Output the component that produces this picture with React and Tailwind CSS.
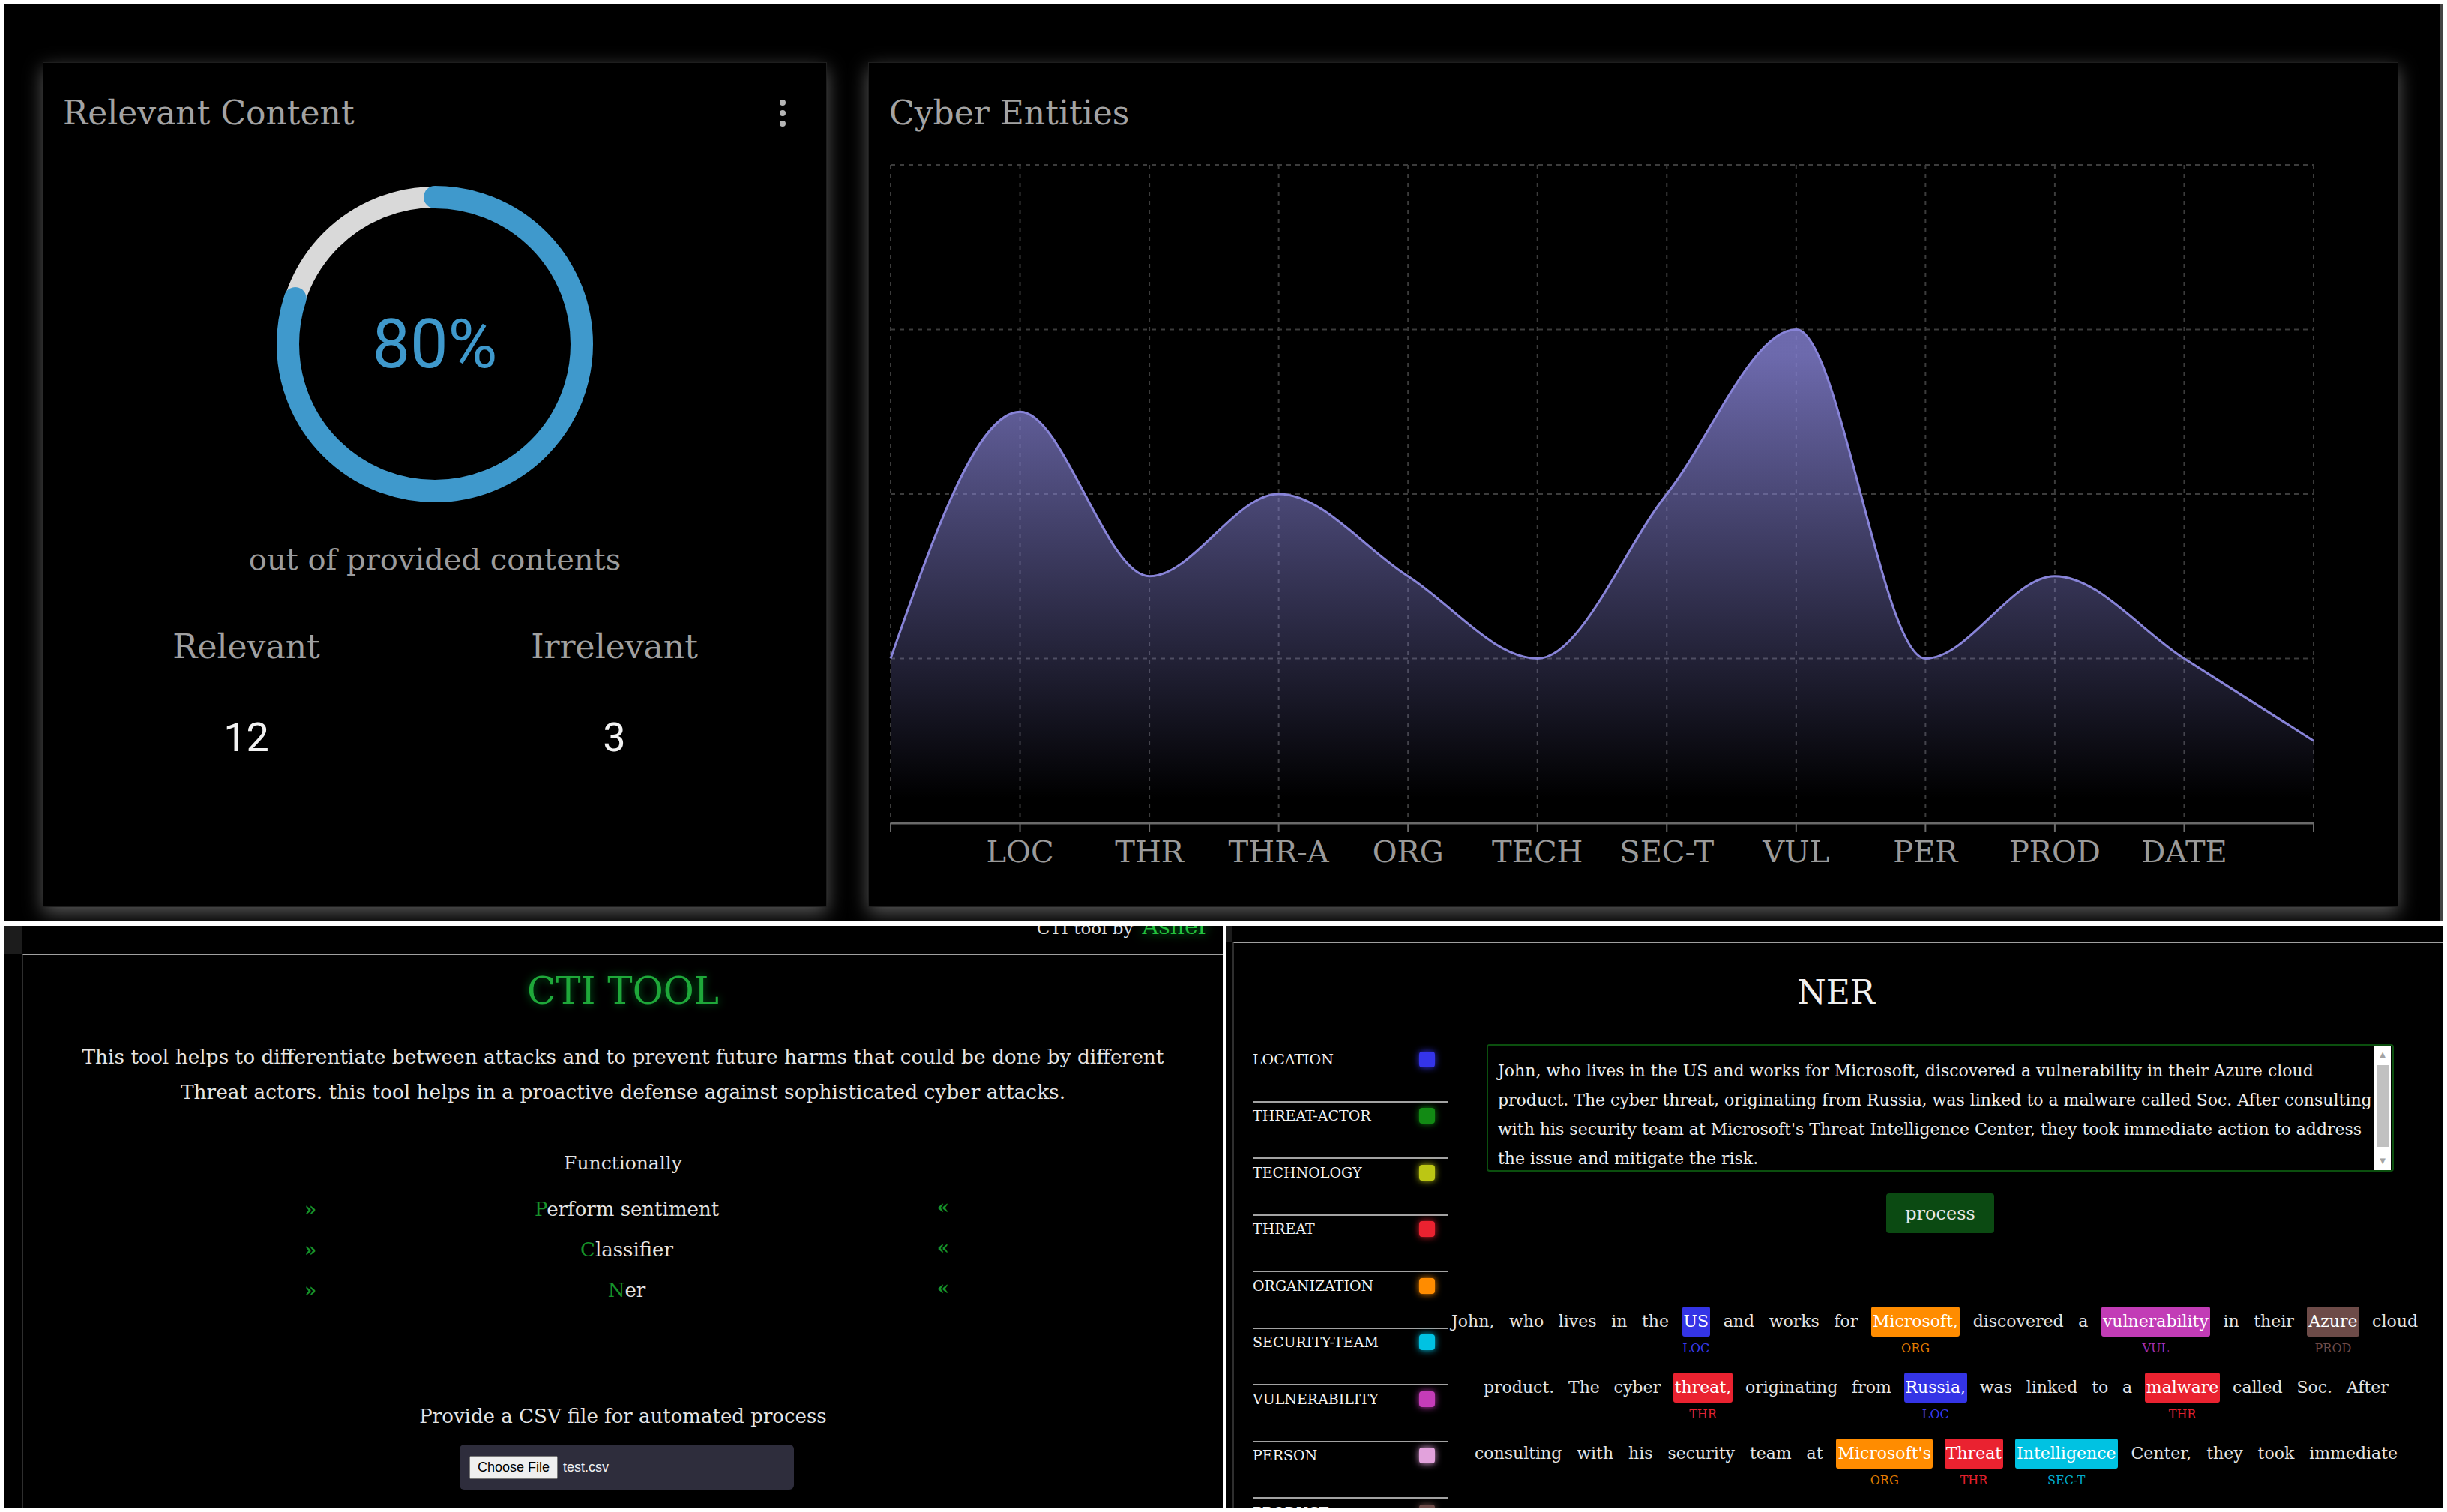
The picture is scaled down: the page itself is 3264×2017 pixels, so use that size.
import React from 'react';

const slab = "font-['DejaVu_Serif','Liberation_Serif',serif]";
const sans = "font-['Roboto','Liberation_Sans',sans-serif]";

const CATS = ['LOC', 'THR', 'THR-A', 'ORG', 'TECH', 'SEC-T', 'VUL', 'PER', 'PROD', 'DATE'];
const VALUES = [1, 2.5, 1.5, 2, 1.5, 1, 2, 3, 1, 1.5, 1, 0.5];
const W = 1898;
const STEP = W / 11;
const TOP = 10;
const UNIT = 219.5;
const BASE = TOP + 4 * UNIT;

// monotone-x cubic, same maths as d3.curveMonotoneX
const monotone = (pts) => {
    const n = pts.length;
    const t = new Array(n).fill(0);
    for (let i = 1; i < n - 1; i++) {
        const [x0, y0] = pts[i - 1];
        const [x1, y1] = pts[i];
        const [x2, y2] = pts[i + 1];
        const h0 = x1 - x0, h1 = x2 - x1;
        const s0 = (y1 - y0) / h0, s1 = (y2 - y1) / h1;
        const p = (s0 * h1 + s1 * h0) / (h0 + h1);
        t[i] = (Math.sign(s0) + Math.sign(s1)) * Math.min(Math.abs(s0), Math.abs(s1), 0.5 * Math.abs(p)) || 0;
    }
    t[0] = (3 * (pts[1][1] - pts[0][1]) / (pts[1][0] - pts[0][0]) - t[1]) / 2;
    t[n - 1] = (3 * (pts[n - 1][1] - pts[n - 2][1]) / (pts[n - 1][0] - pts[n - 2][0]) - t[n - 2]) / 2;
    let d = `M${pts[0][0]},${pts[0][1]}`;
    for (let i = 0; i < n - 1; i++) {
        const [x0, y0] = pts[i];
        const [x1, y1] = pts[i + 1];
        const dx = (x1 - x0) / 3;
        d += `C${x0 + dx},${y0 + dx * t[i]},${x1 - dx},${y1 - dx * t[i + 1]},${x1},${y1}`;
    }
    return d;
};

const AreaChart = () => {
    const pts = VALUES.map((v, i) => [i * STEP, BASE - v * UNIT]);
    const line = monotone(pts);
    const area = `${line}L${W},${BASE}L0,${BASE}Z`;
    return (
        <svg width={W + 6} height={BASE + 70} className="overflow-visible">
            <defs>
                <linearGradient id="areaFill" x1="0" y1="0" x2="0" y2="1">
                    <stop offset="5%" stopColor="#8884d8" stopOpacity="0.8" />
                    <stop offset="95%" stopColor="#8884d8" stopOpacity="0" />
                </linearGradient>
            </defs>
            <g transform="translate(2,0)">
                {[0, 1, 2, 3].map((k) => (
                    <line key={k} x1="0" x2={W} y1={TOP + k * UNIT} y2={TOP + k * UNIT} stroke="#3c3c3c" strokeWidth="2" strokeDasharray="6 6" />
                ))}
                {VALUES.map((_, i) => (
                    <line key={i} x1={i * STEP} x2={i * STEP} y1={TOP} y2={BASE} stroke="#3c3c3c" strokeWidth="2" strokeDasharray="6 6" />
                ))}
                <path d={area} fill="url(#areaFill)" />
                <path d={line} fill="none" stroke="#8884d8" strokeWidth="3" />
                <line x1="0" x2={W} y1={BASE} y2={BASE} stroke="#6a6a6a" strokeWidth="3" />
                {VALUES.map((_, i) => (
                    <line key={i} x1={i * STEP} x2={i * STEP} y1={BASE} y2={BASE + 12} stroke="#6a6a6a" strokeWidth="2" />
                ))}
                {CATS.map((c, i) => (
                    <text key={c} x={(i + 1) * STEP} y={BASE + 52} textAnchor="middle" fill="#9a9a9a" fontSize="40" fontFamily="DejaVu Serif, serif">
                        {c}
                    </text>
                ))}
            </g>
        </svg>
    );
};

const Donut = () => {
    const r = 196;
    const c = 2 * Math.PI * r;
    return (
        <div className="relative w-[430px] h-[430px] mx-auto mt-[71px]">
            <svg width="430" height="430">
                <circle cx="215" cy="215" r={r} fill="none" stroke="#d9d9d9" strokeWidth="28" />
                <circle
                    cx="215" cy="215" r={r} fill="none" stroke="#3f99cc" strokeWidth="30"
                    strokeLinecap="round" strokeDasharray={`${c * 0.8} ${c}`} transform="rotate(-90 215 215)"
                />
            </svg>
            <div className={`absolute inset-0 flex items-center justify-center ${sans} text-[90px] text-[#3f99cc]`}>80%</div>
        </div>
    );
};

const RelevantCard = () => (
    <div className="w-[1046px] h-[1127px] shrink-0 bg-black border border-[#1e1e1e] shadow-[0_8px_24px_rgba(255,255,255,0.35)]">
        <div className="flex justify-between items-center pl-[26px] pr-[53px] pt-[45px]">
            <span className={`${slab} text-[44px] leading-[44px] text-[#a3a3a3]`}>Relevant Content</span>
            <svg width="10" height="36" viewBox="0 0 10 36">
                <circle cx="5" cy="4" r="4" fill="#b5b5b5" />
                <circle cx="5" cy="18" r="4" fill="#b5b5b5" />
                <circle cx="5" cy="32" r="4" fill="#b5b5b5" />
            </svg>
        </div>
        <Donut />
        <div className={`${slab} mt-[48px] text-center text-[40px] leading-[48px] text-[#9c9c9c]`}>out of provided contents</div>
        <div className="flex pl-[25px] mt-[67px]">
            <div className="w-[491px] flex flex-col items-center">
                <span className={`${slab} text-[44px] leading-[52px] text-[#a0a0a0]`}>Relevant</span>
                <span className={`${sans} mt-[65px] text-[54px] leading-[60px] text-[#f2f2f2]`}>12</span>
            </div>
            <div className="w-[491px] flex flex-col items-center">
                <span className={`${slab} text-[44px] leading-[52px] text-[#a0a0a0]`}>Irrelevant</span>
                <span className={`${sans} mt-[65px] text-[54px] leading-[60px] text-[#f2f2f2]`}>3</span>
            </div>
        </div>
    </div>
);

const EntitiesCard = () => (
    <div className="w-[2041px] h-[1127px] shrink-0 bg-black border border-[#1e1e1e] shadow-[0_8px_24px_rgba(255,255,255,0.35)]">
        <div className={`${slab} pl-[27px] pt-[45px] text-[44px] leading-[44px] text-[#a3a3a3]`}>Cyber Entities</div>
        <div className="pl-[27px] mt-[37px]">
            <AreaChart />
        </div>
    </div>
);

const FEATURES = [
    ['P', 'erform sentiment'],
    ['C', 'lassifier'],
    ['N', 'er'],
];

const CtiPanel = () => (
    <div className="w-[1625px] h-[776px] shrink-0 bg-black overflow-hidden flex flex-col">
        <div className="h-[37px] shrink-0 flex overflow-hidden">
            <div className="w-[23px] h-full bg-[#1c1c1c]" />
            <div className={`${slab} flex-1 -mt-[11px] flex items-baseline justify-end gap-[12px] pr-[19px] leading-[24px]`}>
                <span className="text-[23px] text-[#e2e2e2]">CTI tool by</span>
                <span className="text-[30px] text-[#23c13d] [text-shadow:0_0_14px_rgba(0,220,60,0.7)]">Asher</span>
            </div>
        </div>
        <div className={`${slab} flex-1 ml-[23px] border-t-2 border-l-2 border-t-[#a0a0a0] border-l-[#2e2e2e] flex flex-col items-center text-[#e4e4e4]`}>
            <div className="pt-[18px] text-[50px] leading-[60px] text-[#1fa83a] [text-shadow:0_0_12px_rgba(0,200,60,0.55)]">CTI TOOL</div>
            <p className="mt-[34px] text-center text-[26.4px] leading-[47px] whitespace-nowrap">
                This tool helps to differentiate between attacks and to prevent future harms that could be done by different
                <br />
                Threat actors. this tool helps in a proactive defense against sophisticated cyber attacks.
            </p>
            <div className="mt-[52px] text-[25px] leading-[40px]">Functionally</div>
            <div className="mt-[14px] w-[860px] ml-[10px] flex flex-col">
                {FEATURES.map(([first, rest]) => (
                    <div key={rest} className="h-[54px] flex items-center justify-between">
                        <span className="text-[26px] font-bold text-[#17922a]">»</span>
                        <span className="text-[26px]">
                            <span className="text-[#16922a]">{first}</span>
                            {rest}
                        </span>
                        <span className="text-[26px] font-bold text-[#17922a] -mt-[6px]">«</span>
                    </div>
                ))}
            </div>
            <div className="mt-[121px] text-[26px] leading-[40px]">Provide a CSV file for automated process</div>
            <div className="mt-[18px] w-[446px] h-[60px] ml-[10px] rounded-[6px] bg-[#2e2d3c] flex items-center pl-[13px] gap-[7px] font-['Liberation_Sans',sans-serif] text-[18px]">
                <span className="h-[31px] px-[10px] flex items-center bg-[#efefef] border border-[#767676] rounded-[2px] text-black">Choose File</span>
                <span className="text-[#f0f0f0]">test.csv</span>
            </div>
        </div>
    </div>
);

const LEGEND = [
    ['LOCATION', 'bg-[#3434ea] shadow-[0_0_10px_#3434ea]'],
    ['THREAT-ACTOR', 'bg-[#128a14] shadow-[0_0_10px_#128a14]'],
    ['TECHNOLOGY', 'bg-[#bcc614] shadow-[0_0_10px_#bcc614]'],
    ['THREAT', 'bg-[#ea2230] shadow-[0_0_10px_#ea2230]'],
    ['ORGANIZATION', 'bg-[#ff8c00] shadow-[0_0_10px_#ff8c00]'],
    ['SECURITY-TEAM', 'bg-[#00c2e2] shadow-[0_0_10px_#00c2e2]'],
    ['VULNERABILITY', 'bg-[#c43cb8] shadow-[0_0_10px_#c43cb8]'],
    ['PERSON', 'bg-[#e2a2dc] shadow-[0_0_10px_#e2a2dc]'],
    ['PRODUCT', 'bg-[#6d4b48] shadow-[0_0_10px_#6d4b48]'],
];

const ENT = {
    LOC: { bg: 'bg-[#3434e6]', fg: 'text-[#3a3aea]' },
    ORG: { bg: 'bg-[#ff8c00]', fg: 'text-[#e07c00]' },
    VUL: { bg: 'bg-[#c23cb6]', fg: 'text-[#a52fae]' },
    PROD: { bg: 'bg-[#6d4b48]', fg: 'text-[#6d4b48]' },
    THR: { bg: 'bg-[#ea2230]', fg: 'text-[#e2202e]' },
    'SEC-T': { bg: 'bg-[#00c2e2]', fg: 'text-[#00a9cc]' },
};

const LINES = [
    {
        pad: 'ml-[2px] mr-[31px]',
        words: [['John,'], ['who'], ['lives'], ['in'], ['the'], ['US', 'LOC'], ['and'], ['works'], ['for'], ['Microsoft,', 'ORG'], ['discovered'], ['a'], ['vulnerability', 'VUL'], ['in'], ['their'], ['Azure', 'PROD'], ['cloud']],
    },
    {
        pad: 'ml-[45px] mr-[70px]',
        words: [['product.'], ['The'], ['cyber'], ['threat,', 'THR'], ['originating'], ['from'], ['Russia,', 'LOC'], ['was'], ['linked'], ['to'], ['a'], ['malware', 'THR'], ['called'], ['Soc.'], ['After']],
    },
    {
        pad: 'ml-[33px] mr-[58px]',
        words: [['consulting'], ['with'], ['his'], ['security'], ['team'], ['at'], ["Microsoft's", 'ORG'], ['Threat', 'THR'], ['Intelligence', 'SEC-T'], ['Center,'], ['they'], ['took'], ['immediate']],
    },
];

const Word = ({ text, tag }) => {
    const e = tag && ENT[tag];
    return (
        <div className="flex flex-col items-center">
            <span className={`h-[40px] leading-[40px] px-[2px] rounded-[3px] ${e ? `${e.bg} text-white` : 'text-[#e4e4e4]'}`}>{text}</span>
            {e && <span className={`mt-[4px] text-[16px] leading-[24px] ${e.fg}`}>{tag}</span>}
        </div>
    );
};

const NerPanel = () => (
    <div className={`${slab} w-[1622px] h-[776px] shrink-0 bg-black overflow-hidden flex flex-col`}>
        <div className="h-[21px] shrink-0 flex">
            <div className="w-[8px] h-full bg-[#1c1c1c]" />
        </div>
        <div className="flex-1 min-h-0 ml-[8px] border-t-2 border-l-2 border-t-[#a0a0a0] border-l-[#2e2e2e]">
            <div className="h-[135px] pt-[41px] text-center text-[44px] leading-[50px] text-[#f0f0f0] pr-[6px]">NER</div>
            <div className="flex">
                <div className="w-[261px] ml-[25px] shrink-0">
                    {LEGEND.map(([name, chip], i) => (
                        <div key={name} className={`h-[75.5px] ${i ? 'border-t-2 border-[#a3a3a3]' : ''}`}>
                            <div className={`h-[40px] flex items-center justify-between pr-[18px] ${i ? '-mt-[2px]' : ''}`}>
                                <span className="text-[19px] text-[#f2f2f2]">{name}</span>
                                <span className={`w-[21px] h-[21px] rounded-[4px] ${chip}`} />
                            </div>
                        </div>
                    ))}
                </div>
                <div className="flex-1 flex flex-col">
                    <div className="w-[1210px] ml-[51px] flex flex-col items-center">
                        <div className="w-full h-[170px] flex border-2 border-[#0b4f0e] rounded-[4px]">
                            <div className="flex-1 pl-[13px] pt-[14px] text-[22px] leading-[39px] text-[#ededed] whitespace-nowrap">
                                John, who lives in the US and works for Microsoft, discovered a vulnerability in their Azure cloud
                                <br />
                                product. The cyber threat, originating from Russia, was linked to a malware called Soc. After consulting
                                <br />
                                with his security team at Microsoft's Threat Intelligence Center, they took immediate action to address
                                <br />
                                the issue and mitigate the risk.
                            </div>
                            <div className="w-[22px] mr-[2px] bg-white flex flex-col items-center text-[10px] leading-[12px] text-[#a3a3a3] font-['DejaVu_Sans',sans-serif]">
                                <span className="mt-[6px]">▲</span>
                                <div className="w-[16px] h-[109px] mt-[8px] bg-[#c1c1c1]" />
                                <span className="mt-auto mb-[6px]">▼</span>
                            </div>
                        </div>
                        <div className="mt-[29px] w-[144px] h-[53px] rounded-[4px] bg-[#0b4a12] flex items-center justify-center text-[24px] text-[#e8e8e8]">process</div>
                    </div>
                    <div className="mt-[98px] text-[22px]">
                        {LINES.map((ln, i) => (
                            <div key={i} className={`h-[88px] flex justify-between items-start ${ln.pad}`}>
                                {ln.words.map(([text, tag], j) => (
                                    <Word key={j} text={text} tag={tag} />
                                ))}
                            </div>
                        ))}
                    </div>
                </div>
            </div>
        </div>
    </div>
);

const App = () => (
    <div className="w-[3264px] h-[2017px] bg-white pt-[6px] pl-[6px] overflow-hidden">
        <div className="w-[3252px] h-[1222px] bg-black overflow-hidden flex gap-[55px] pl-[51px] pt-[77px] border-r-[3px] border-[#444]">
            <RelevantCard />
            <EntitiesCard />
        </div>
        <div className="mt-[7px] flex gap-[5px]">
            <CtiPanel />
            <NerPanel />
        </div>
    </div>
);

export default App;
